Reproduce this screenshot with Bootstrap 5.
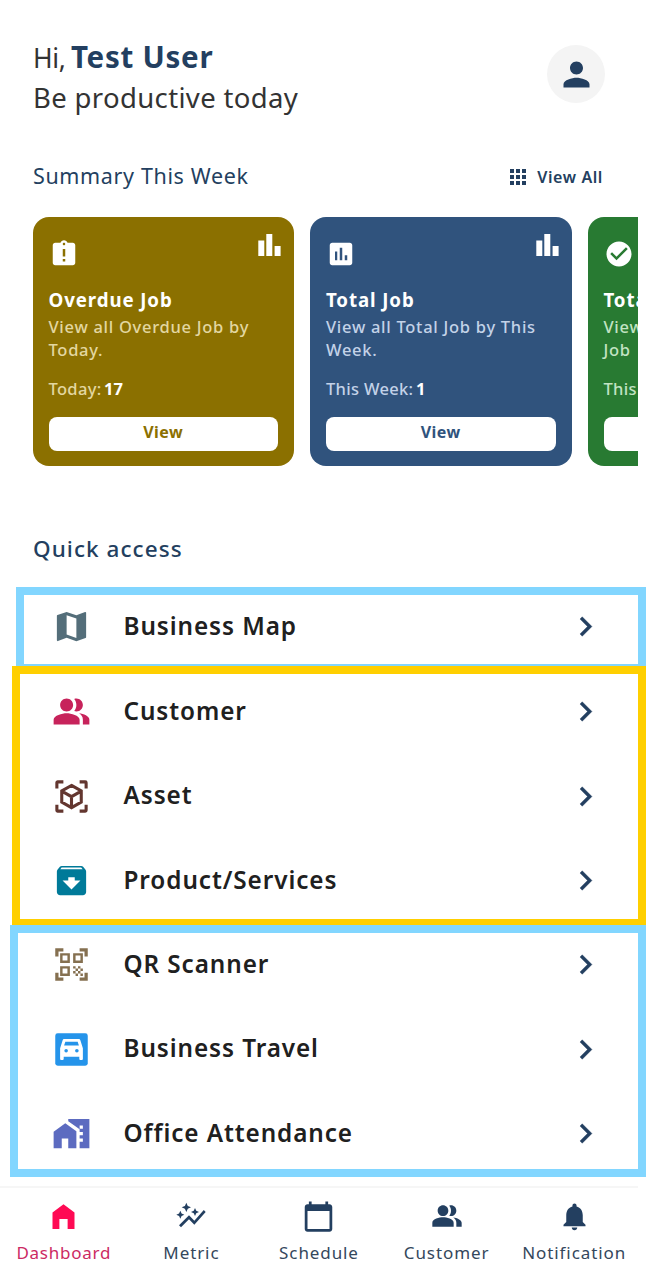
<!DOCTYPE html>
<html lang="en">
<head>
<meta charset="utf-8">
<meta name="viewport" content="width=device-width, initial-scale=1">
<title>Dashboard</title>
<link href="https://cdn.jsdelivr.net/npm/bootstrap@5.3.0/dist/css/bootstrap.min.css" rel="stylesheet">
<style>
:root{--navy:#233f60}
body{font-family:"Noto Sans","Open Sans",sans-serif;background:#fff;color:#222;overflow:hidden}
svg{display:block;flex:none}
svg:not([fill]){fill:currentColor}
.app-shell{width:638px;height:1280px}
.greet{height:217px;padding:38px 33px 0}
.greet-line{font-size:27.5px;line-height:39px;color:#333;letter-spacing:.35px;white-space:nowrap}
.greet-line .hi{letter-spacing:-.4px;font-size:26.5px}
.greet-line strong{font-size:29.5px;line-height:1;font-weight:700;color:var(--navy);letter-spacing:.75px;margin-left:-2px}
.avatar{width:58px;height:58px;background:#f4f4f4;color:var(--navy);margin-top:7px}
.sum-head{height:30px;margin-top:44.5px;color:var(--navy)}
.sum-title{font-size:21.5px;letter-spacing:.64px}
.view-all{font-size:16px;font-weight:600;letter-spacing:.6px;gap:7px;padding-right:2px;line-height:20px}
.strip{padding-left:32.5px;gap:16px;height:248.5px}
.job-card{flex:none;width:261.5px;height:248.5px;border-radius:16px;padding:0 16px;color:#fff;background:var(--tone)}
.job-top{height:71px;padding-top:22px}
.job-top .bars{margin:-5.5px -3px 0 0}
.job-card h3{font-size:18.7px;font-weight:700;line-height:24px;letter-spacing:.9px;margin:0 0 2.5px;white-space:nowrap}
.job-text{font-size:16.5px;font-weight:500;line-height:23.3px;letter-spacing:.72px;height:46.6px;margin:0;color:var(--soft);white-space:nowrap}
.job-count{font-size:16.5px;font-weight:500;line-height:24px;letter-spacing:.32px;margin:15.5px 0 16.3px;color:var(--soft);white-space:nowrap}
.job-count b{color:#fff;margin-left:-2px;letter-spacing:0}
.job-btn{height:34px;border-radius:8px;background:#fff;color:var(--tone);font-size:16px;font-weight:700;letter-spacing:.5px;line-height:30px;padding:0 0 3px;border:0}
.quick{font-size:22.5px;line-height:30px;font-weight:500;letter-spacing:1.05px;color:var(--navy);margin:68px 0 0 33px}
.frame{border:8.5px solid var(--edge);margin-right:-8px}
.frame-a{--edge:#82d6ff;height:79px;margin-top:23px;margin-left:16px;border-bottom-width:2px;padding-bottom:5px}
.frame-b{--edge:#ffcf00;height:259px;margin-left:12px;border-bottom-width:6px}
.frame-c{--edge:#82d6ff;height:252px;margin-left:10px;padding-bottom:3px}
.entry{height:84.4px;flex:none;font-size:24.3px;font-weight:600;color:#202020;white-space:nowrap;letter-spacing:.92px}
.entry span{margin-left:33px;padding-bottom:1px;flex:1}
.entry .chev{color:var(--navy);margin-right:33.5px}
.frame-a .entry{padding-left:27.5px}
.frame-b .entry{padding-left:31.5px}
.frame-c .entry{padding-left:33.5px}
.tabs{height:94px;margin-top:9px;border-top:2px solid #f6f6f6;color:var(--navy);font-size:17px;letter-spacing:.9px}
.tab{width:20%;padding-top:12px;white-space:nowrap}
.tab .ico{height:33px}
.tab .cap{line-height:24px;margin-top:8.5px;color:#34475c}
.tab.on{color:#ff0a54}
.tab.on .cap{color:#cc2a63;letter-spacing:.75px}
</style>
<script src="https://cdn.jsdelivr.net/npm/bootstrap@5.3.0/dist/js/bootstrap.bundle.min.js"></script>
</head>
<body>
<svg width="0" height="0" class="position-absolute" aria-hidden="true">
<symbol id="bars" viewBox="0 0 23 22"><path d="M.3 6.5h6V22h-6zM8.3 0h6v22h-6zM16.6 12h6v10h-6z"/></symbol>
<symbol id="people" viewBox="0 0 24 24"><path d="M16.67 13.13C18.04 14.06 19 15.32 19 17v3h4v-3c0-2.18-3.57-3.47-6.33-3.87zM15 12c2.21 0 4-1.79 4-4s-1.79-4-4-4c-.47 0-.91.1-1.33.24C14.5 5.27 15 6.58 15 8s-.5 2.73-1.33 3.76c.42.14.86.24 1.33.24zM9 12c2.21 0 4-1.79 4-4s-1.79-4-4-4-4 1.79-4 4 1.79 4 4 4zm0 1c-2.67 0-8 1.34-8 4v3h16v-3c0-2.66-5.33-4-8-4z"/></symbol>
<symbol id="chev" viewBox="0 0 24 24"><path d="M10 6L8.6 7.4 13.2 12l-4.6 4.6L10 18l6-6z" stroke="currentColor" stroke-width=".2"/></symbol>
</svg>
<main class="app-shell d-flex flex-column">
  <header class="greet flex-shrink-0">
    <div class="d-flex justify-content-between">
      <div>
        <div class="greet-line"><span class="hi">Hi,</span> <strong>Test User</strong></div>
        <div class="greet-line">Be productive today</div>
      </div>
      <div class="avatar rounded-circle d-flex align-items-center justify-content-center"><svg width="39" height="39" viewBox="0 0 24 24"><path d="M12 12c2.21 0 4-1.79 4-4s-1.79-4-4-4-4 1.79-4 4 1.79 4 4 4zm0 2c-2.67 0-8 1.34-8 4v2h16v-2c0-2.66-5.33-4-8-4z"/></svg></div>
    </div>
    <div class="sum-head d-flex justify-content-between align-items-center">
      <div class="sum-title">Summary This Week</div>
      <div class="view-all d-flex align-items-center"><svg width="24" height="24" viewBox="0 0 24 24"><path d="M4 4h4v4H4zM10 4h4v4h-4zM16 4h4v4h-4zM4 10h4v4H4zM10 10h4v4h-4zM16 10h4v4h-4zM4 16h4v4H4zM10 16h4v4h-4zM16 16h4v4h-4z"/></svg>View All</div>
    </div>
  </header>

  <section class="strip d-flex overflow-hidden flex-shrink-0">
    <article class="job-card" style="--tone:#8b7000;--soft:#e3d7a0">
      <div class="job-top d-flex justify-content-between"><svg width="30" height="30" viewBox="0 0 24 24"><path d="M19 3h-4.18C14.4 1.84 13.3 1 12 1c-1.3 0-2.4.84-2.82 2H5c-1.1 0-2 .9-2 2v14c0 1.1.9 2 2 2h14c1.1 0 2-.9 2-2V5c0-1.1-.9-2-2-2zm-6 15h-2v-2h2v2zm0-4h-2V8h2v6zm-1-9c-.55 0-1-.45-1-1s.45-1 1-1 1 .45 1 1-.45 1-1 1z"/></svg><svg class="bars" width="23" height="22"><use href="#bars"/></svg></div>
      <h3>Overdue Job</h3>
      <p class="job-text">View all Overdue Job by<br>Today.</p>
      <p class="job-count">Today: <b>17</b></p>
      <button class="btn job-btn w-100">View</button>
    </article>
    <article class="job-card" style="--tone:#30537d;--soft:#c3d2e8">
      <div class="job-top d-flex justify-content-between"><svg width="30" height="30" viewBox="0 0 24 24"><path d="M19 3H5c-1.1 0-2 .9-2 2v14c0 1.1.9 2 2 2h14c1.1 0 2-.9 2-2V5c0-1.1-.9-2-2-2zM9 17H7.2v-7H9zm4 0h-2V7h2zm4 0h-2v-4h2z"/></svg><svg class="bars" width="23" height="22"><use href="#bars"/></svg></div>
      <h3>Total Job</h3>
      <p class="job-text">View all Total Job by This<br>Week.</p>
      <p class="job-count">This Week: <b>1</b></p>
      <button class="btn job-btn w-100">View</button>
    </article>
    <article class="job-card" style="--tone:#287a32;--soft:#c2e3c3">
      <div class="job-top d-flex"><svg width="30" height="30" viewBox="0 0 24 24"><path d="M12 2C6.48 2 2 6.48 2 12s4.48 10 10 10 10-4.48 10-10S17.52 2 12 2zm-2 15l-5-5 1.41-1.41L10 14.17l7.59-7.59L19 8l-9 9z"/></svg></div>
      <h3>Total</h3>
      <p class="job-text">View<br>Job</p>
      <p class="job-count">This</p>
      <button class="btn job-btn w-100" aria-label="View"></button>
    </article>
  </section>

  <h2 class="quick flex-shrink-0">Quick access</h2>

  <div class="frame frame-a d-flex flex-column justify-content-center flex-shrink-0">
    <div class="entry d-flex align-items-center"><svg width="39" height="39" viewBox="0 0 24 24" fill="#546e7a"><path d="M20.5 3l-.16.03L15 5.1 9 3 3.36 4.9c-.21.07-.36.25-.36.48V20.5c0 .28.22.5.5.5l.16-.03L9 18.9l6 2.1 5.64-1.9c.21-.07.36-.25.36-.48V3.5c0-.28-.22-.5-.5-.5zM15 19l-6-2.11V5l6 2.11V19z"/></svg><span>Business Map</span><svg class="chev" width="39" height="39"><use href="#chev"/></svg></div>
  </div>
  <div class="frame frame-b d-flex flex-column justify-content-center flex-shrink-0">
    <div class="entry d-flex align-items-center"><svg width="39" height="39" fill="#c7235b"><use href="#people"/></svg><span>Customer</span><svg class="chev" width="39" height="39"><use href="#chev"/></svg></div>
    <div class="entry d-flex align-items-center"><svg width="39" height="39" viewBox="0 0 24 24" fill="none" stroke="#63362f" stroke-width="1.9"><path d="M3 7V3.5a.5.5 0 0 1 .5-.5H7M17 3h3.5a.5.5 0 0 1 .5.5V7M21 17v3.5a.5.5 0 0 1-.5.5H17M7 21H3.5a.5.5 0 0 1-.5-.5V17M12 5.2l6 3.4v6.9l-6 3.4-6-3.4V8.6zM6 8.7l6 3.4 6-3.4M12 12v7"/></svg><span>Asset</span><svg class="chev" width="39" height="39"><use href="#chev"/></svg></div>
    <div class="entry d-flex align-items-center"><svg width="39" height="39" viewBox="0 0 24 24" fill="#007a99"><path d="M20.54 5.23l-1.39-1.68C18.88 3.21 18.47 3 18 3H6c-.47 0-.88.21-1.16.55L3.46 5.23C3.17 5.57 3 6.02 3 6.5V19c0 1.1.9 2 2 2h14c1.1 0 2-.9 2-2V6.5c0-.48-.17-.93-.46-1.27zM12 17.5L6.5 12H10v-2h4v2h3.5L12 17.5zM5.12 5l.81-1h12l.94 1H5.12z"/></svg><span>Product/Services</span><svg class="chev" width="39" height="39"><use href="#chev"/></svg></div>
  </div>
  <div class="frame frame-c d-flex flex-column justify-content-center flex-shrink-0">
    <div class="entry d-flex align-items-center"><svg width="39" height="39" viewBox="0 0 24 24" fill="#857050"><path d="M9.5 6.5v3h-3v-3zM11 5H5v6h6zM9.5 14.5v3h-3v-3zM11 13H5v6h6zM17.5 6.5v3h-3v-3zM19 5h-6v6h6z" fill-rule="evenodd"/><path d="M13 13h1.5v1.5H13zM14.5 14.5H16V16h-1.5zM16 13h1.5v1.5H16zM13 16h1.5v1.5H13zM14.5 17.5H16V19h-1.5zM16 16h1.5v1.5H16zM17.5 14.5H19V16h-1.5zM17.5 17.5H19V19h-1.5zM22 7h-2V4h-3V2h5zM22 22v-5h-2v3h-3v2zM2 22h5v-2H4v-3H2zM2 2v5h2V4h3V2z"/></svg><span>QR Scanner</span><svg class="chev" width="39" height="39"><use href="#chev"/></svg></div>
    <div class="entry d-flex align-items-center"><svg width="39" height="39" viewBox="0 0 24 24" fill="#2594ea"><rect x="2" y="2" width="20" height="20" rx="1.5"/><path fill="#fff" d="M7.6 5.5h8.8c.5 0 .9.3 1.05.75L19 11.2v6.5c0 .5-.3.8-.8.8h-.6c-.5 0-.8-.3-.8-.8v-1.2H7.2v1.2c0 .5-.3.8-.8.8h-.6c-.5 0-.8-.3-.8-.8v-6.5l1.55-4.95c.15-.45.55-.75 1.05-.75z"/><path d="M8.2 7.2h7.6l.75 2.4h-9.1z"/><circle cx="8.7" cy="12.8" r="1.1"/><circle cx="15.3" cy="12.8" r="1.1"/></svg><span>Business Travel</span><svg class="chev" width="39" height="39"><use href="#chev"/></svg></div>
    <div class="entry d-flex align-items-center"><svg width="39" height="39" viewBox="0 0 24 24" fill="#5c6bc0"><path d="M8.17 5.7L1 10.9V21h5v-6h4v6h5V10.6z"/><path d="M10 3v1.51l7 4.9V11h2v2h-2v2h2v2h-2v4h6V3H10zm9 6h-2V7h2v2z"/></svg><span>Office Attendance</span><svg class="chev" width="39" height="39"><use href="#chev"/></svg></div>
  </div>

  <nav class="tabs d-flex flex-shrink-0">
    <div class="tab on d-flex flex-column align-items-center"><div class="ico"><svg width="33" height="33" viewBox="0 0 24 24"><path d="M12 3l8 6v12h-5v-7.2H9V21H4V9z"/></svg></div><div class="cap">Dashboard</div></div>
    <div class="tab d-flex flex-column align-items-center"><div class="ico"><svg width="32" height="32" viewBox="0 0 24 24"><path d="M14.06 9.94L12 9l2.06-.94L15 6l.94 2.06L18 9l-2.06.94L15 12l-.94-2.06zM4 14l.94-2.06L7 11l-2.06-.94L4 8l-.94 2.06L1 11l2.06.94L4 14zm4.5-5l1.09-2.41L12 5.5 9.59 4.41 8.5 2 7.41 4.41 5 5.5l2.41 1.09L8.5 9zm-4 11.5l6-6.01 4 4L23 8.93l-1.41-1.41-7.09 7.97-4-4L3 19l1.5 1.5z"/></svg></div><div class="cap">Metric</div></div>
    <div class="tab d-flex flex-column align-items-center"><div class="ico"><svg width="33" height="33" viewBox="0 0 24 24"><path d="M20 3h-1V1h-2v2H7V1H5v2H4c-1.1 0-2 .9-2 2v16c0 1.1.9 2 2 2h16c1.1 0 2-.9 2-2V5c0-1.1-.9-2-2-2zm0 18H4V8h16v13z"/></svg></div><div class="cap">Schedule</div></div>
    <div class="tab d-flex flex-column align-items-center"><div class="ico"><svg width="32" height="32"><use href="#people"/></svg></div><div class="cap">Customer</div></div>
    <div class="tab d-flex flex-column align-items-center"><div class="ico"><svg width="33" height="33" viewBox="0 0 24 24"><path d="M12 22c1.1 0 2-.9 2-2h-4c0 1.1.89 2 2 2zm6-6v-5c0-3.07-1.64-5.64-4.5-6.32V4c0-.83-.67-1.5-1.5-1.5s-1.5.67-1.5 1.5v.68C7.63 5.36 6 7.92 6 11v5l-2 2v1h16v-1l-2-2z"/></svg></div><div class="cap">Notification</div></div>
  </nav>
</main>
</body>
</html>
